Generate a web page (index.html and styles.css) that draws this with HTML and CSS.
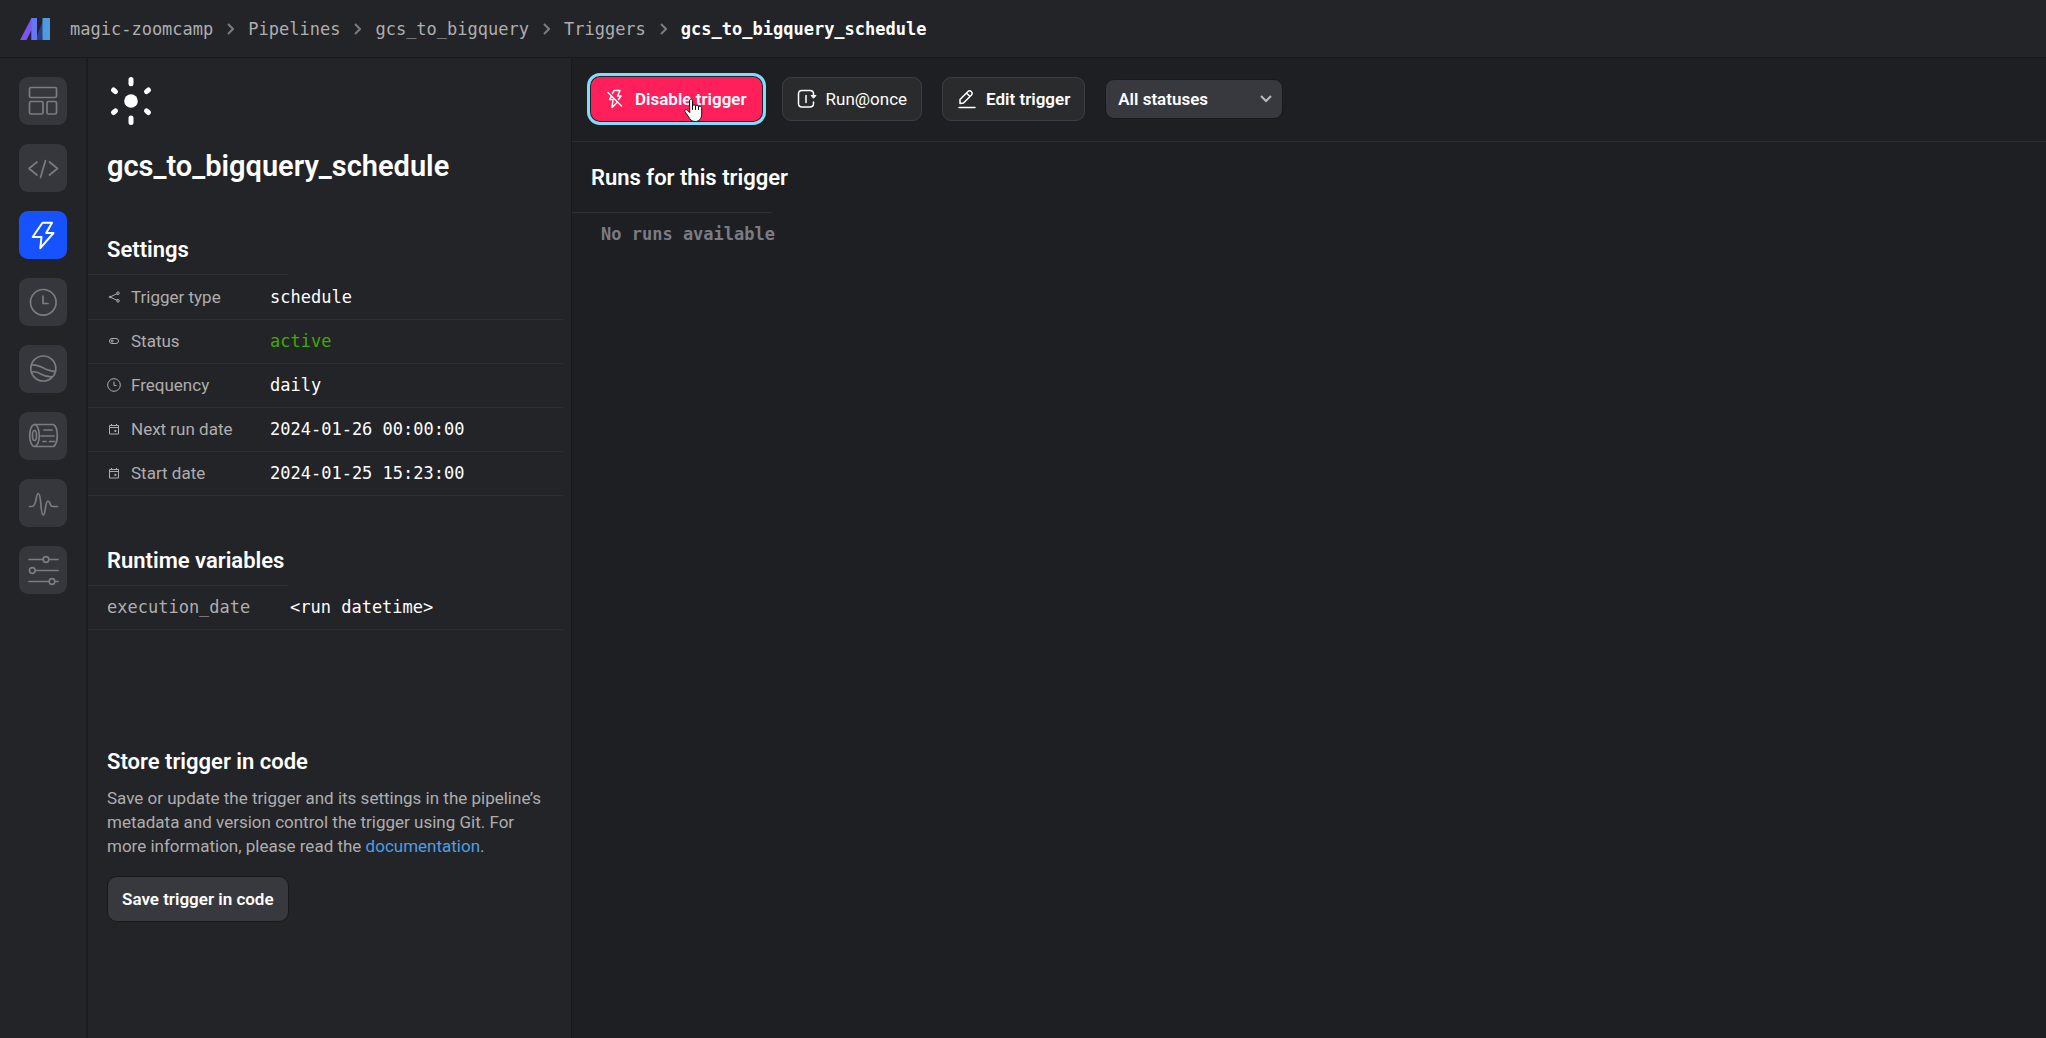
FILE: index.html
```html
<!DOCTYPE html>
<html lang="en">
<head>
<meta charset="utf-8">
<title>gcs_to_bigquery_schedule</title>
<link rel="stylesheet" href="styles.css">
</head>
<body>
<header class="topbar">
  <a class="logo" href="#" aria-label="Mage">
    <svg width="30" height="24" viewBox="0 0 30 24">
      <path d="M17 23V19L24 1h5L22 23z" fill="#2b3f86"/>
      <path d="M0 23 11.500 1H17v22h-5.500L11.500 13 6.500 23z" fill="#7a55ee"/>
      <path d="M11.500 1H17v22h-5.500z" fill="#6478f2"/>
      <path d="M22.500 1H30v22h-7.500z" fill="#4f9bdd"/>
    </svg>
  </a>
  <nav class="crumbs" aria-label="Breadcrumb">
    <a href="#">magic-zoomcamp</a>
    <svg class="sep" width="7" height="12" viewBox="0 0 7 12"><path d="m1 1 5 5-5 5"/></svg>
    <a href="#">Pipelines</a>
    <svg class="sep" width="7" height="12" viewBox="0 0 7 12"><path d="m1 1 5 5-5 5"/></svg>
    <a href="#">gcs_to_bigquery</a>
    <svg class="sep" width="7" height="12" viewBox="0 0 7 12"><path d="m1 1 5 5-5 5"/></svg>
    <a href="#">Triggers</a>
    <svg class="sep" width="7" height="12" viewBox="0 0 7 12"><path d="m1 1 5 5-5 5"/></svg>
    <a href="#" class="current" aria-current="page">gcs_to_bigquery_schedule</a>
  </nav>
</header>
<div class="body">
  <nav class="rail" aria-label="Pipeline">
    <a href="#" aria-label="Dashboard"><svg viewBox="0 0 48 48"><rect x="10.500" y="10.500" width="27" height="10" rx="1.500"/><rect x="10.500" y="24.500" width="13.500" height="12.500" rx="1.500"/><rect x="28" y="24.500" width="9.500" height="12.500" rx="1.500"/></svg></a>
    <a href="#" aria-label="Edit pipeline"><svg viewBox="0 0 48 48"><path d="m18 18-8 6.500 8 6.500M30.500 18l8 6.500-8 6.500M26.500 16.500l-5 17"/></svg></a>
    <a href="#" class="active" aria-label="Triggers"><svg viewBox="0 0 48 48"><path d="M23.500 11.800h9.500l-5.800 10.200H34.500L21.300 37.200l1.200-11.200h-8.800z"/></svg></a>
    <a href="#" aria-label="Runs"><svg viewBox="0 0 48 48"><circle cx="24.300" cy="24.300" r="12.800"/><path d="M24 18v7.500h5"/></svg></a>
    <a href="#" aria-label="Backfills"><svg viewBox="0 0 48 48"><circle cx="24.300" cy="23.500" r="12.500"/><path d="M12.500 20c9-2 12 6.500 24 6.500M12.500 27c8-2 10 5.500 20.500 4.800"/></svg></a>
    <a href="#" aria-label="Logs"><svg viewBox="0 0 48 48"><ellipse cx="15.500" cy="23.500" rx="4.800" ry="11"/><ellipse cx="15.500" cy="23.500" rx="2" ry="5"/><path d="M15.500 12.500h19c5 3 5 19 0 22h-19M25 18h8M22 24h13M24 29.500h3M30.500 29.500h5"/></svg></a>
    <a href="#" aria-label="Monitor"><svg viewBox="0 0 48 48"><path d="M10.500 27.500h2.500c5 0 3.500-13 6.300-13 3.200 0 2 21.500 4.900 21.500 2.600 0 1.800-14 4.800-14 2.500 0 1.500 5.500 4.500 5.500h5"/></svg></a>
    <a href="#" aria-label="Settings"><svg viewBox="0 0 48 48"><path d="M10 13.500h14M30 13.500h9M16.500 24.500H39M10 35.500h20M36 35.500h3"/><circle cx="27" cy="13.500" r="2.800"/><circle cx="13.300" cy="24.500" r="2.800"/><circle cx="33" cy="35.500" r="2.800"/></svg></a>
  </nav>
  <aside class="panel">
    <svg class="sun" width="48" height="48" viewBox="0 0 48 48"><circle cx="24" cy="24" r="6.800"/><path d="M24 2.500v4.300M24 41v4.500M6.500 13l2 1.700M41.500 13l-2 1.700M6.500 35.500l2-1.700M41.500 35.500l-2-1.700"/></svg>
    <h1>gcs_to_bigquery_schedule</h1>
    <section class="group">
      <h2>Settings</h2>
      <table class="rows settings">
        <tr><th scope="row"><span><svg viewBox="0 0 14 14"><path d="M3 7l7.500-3.500M3 7l7.500 3.500"/><circle cx="3" cy="7" r=".8"/><circle cx="11" cy="3.200" r="1.300"/><circle cx="11" cy="10.800" r="1.300"/></svg>Trigger type</span></th><td>schedule</td></tr>
        <tr><th scope="row"><span><svg viewBox="0 0 14 14"><rect x="2.500" y="4.500" width="9" height="5" rx="2.500"/><circle cx="5.200" cy="7" r="1"/></svg>Status</span></th><td class="ok">active</td></tr>
        <tr><th scope="row"><span><svg viewBox="0 0 14 14"><circle cx="7" cy="7" r="6.300"/><path d="M7 3.500v4h2.500"/></svg>Frequency</span></th><td>daily</td></tr>
        <tr><th scope="row"><span><svg viewBox="0 0 14 14"><path d="M2.500 3.500h9v8.500h-9zM2.500 5.500h9M4.500 2v1.500M9.500 2v1.500"/><path d="M7.800 8.300h1.200v1.200H7.800z"/></svg>Next run date</span></th><td>2024-01-26 00:00:00</td></tr>
        <tr><th scope="row"><span><svg viewBox="0 0 14 14"><path d="M2.500 3.500h9v8.500h-9zM2.500 5.500h9M4.500 2v1.500M9.500 2v1.500"/><path d="M7.800 8.300h1.200v1.200H7.800z"/></svg>Start date</span></th><td>2024-01-25 15:23:00</td></tr>
      </table>
    </section>
    <section class="group">
      <h2>Runtime variables</h2>
      <table class="rows variables">
        <tr><th scope="row">execution_date</th><td>&lt;run datetime&gt;</td></tr>
      </table>
    </section>
    <section class="store">
      <h2>Store trigger in code</h2>
      <p>Save or update the trigger and its settings in the pipeline’s metadata and version control the trigger using Git. For more information, please read the <a href="#">documentation</a>.</p>
      <button type="button" class="save">Save trigger in code</button>
    </section>
  </aside>
  <main class="main">
    <div class="toolbar">
      <button type="button" class="btn danger">
        <svg width="18" height="20" viewBox="0 0 18 20"><path d="M6.500 4.500 8 1.500h6L11.500 7H15l-2.500 3.500M5 7.500 3.500 10.500H7L6 18.500l4.500-4.500M2 3.500l13.500 13.500"/></svg>
        Disable trigger
        <svg class="pointer" width="19" height="25" viewBox="0 0 19 25"><path d="M5.500 2.500c0-2 3-2 3 0V8c0-1.700 3-1.700 3 0v.5c0-1.500 3-1.500 3 .3v.5c0-1.300 3.200-1.300 3.200.8V16c0 5-3 7.500-6.500 7.500S6 21.500 4.700 19L1 13.800c-.8-1.800 1.200-3 2.500-1.500l2 2zM8.500 8v3.500M11.500 8.500v3M14.500 9.300v2.200"/></svg>
      </button>
      <button type="button" class="btn plain">
        <svg width="20" height="20" viewBox="0 0 20 20"><path d="M16.500 8V5C16.500 3 15 1.500 13 1.500H5C3 1.500 1.500 3 1.500 5v9.500c0 2 1.500 3.500 3.500 3.500h8c2 0 3.500-1.500 3.500-3.500V13M9 6.500v7"/><path d="M14.500 6.500h4.500L16.700 9z" fill="#fff" stroke-width="1"/></svg>
        Run@once
      </button>
      <button type="button" class="btn">
        <svg width="20" height="20" viewBox="0 0 20 20"><path d="M3 14.500 3 10.500 11 2.500c2-2 5.500 1 3.500 3.500l-8 8zM9.500 4l3.500 3.500M2 18.500h16"/></svg>
        Edit trigger
      </button>
      <select class="status" aria-label="Status">
        <option>All statuses</option>
      </select>
    </div>
    <h2>Runs for this trigger</h2>
    <p class="empty">No runs available</p>
  </main>
</div>
</body>
</html>
```
FILE: styles.css
```css
* { box-sizing: border-box; }

body {
  margin: 0;
  min-height: 100vh;
  display: flex;
  flex-direction: column;
  background: #1e1f23;
  color: #fff;
  font: 17px/24px Roboto, sans-serif;
}

a { color: inherit; text-decoration: none; }
svg { fill: none; flex: none; }
h1, h2, p { margin: 0; }

h1 { font-size: 29px; line-height: 37px; font-weight: 600; }
h2 { font-size: 22px; line-height: 28px; font-weight: 600; }

.topbar {
  height: 58px;
  display: flex;
  align-items: center;
  gap: 20px;
  padding-left: 20px;
  background: #232428;
  border-bottom: 1px solid #18191c;
}

.logo { display: flex; }

.crumbs {
  display: flex;
  align-items: center;
  gap: 14px;
  font-family: "DejaVu Sans Mono", monospace;
  color: #aeaeae;
}

.crumbs .current { color: #fff; font-weight: 700; }
.sep { stroke: #7b7c80; stroke-width: 2; }

.body { flex: 1; display: flex; }

.rail {
  width: 88px;
  display: flex;
  flex-direction: column;
  gap: 19px;
  padding: 19px;
  background: #232428;
  border-right: 2px solid #1b1c1f;
}

.rail a {
  width: 48px;
  height: 48px;
  border-radius: 9px;
  background: #36373c;
}

.rail svg {
  display: block;
  stroke: #7b7c80;
  stroke-width: 1.7;
  stroke-linecap: round;
  stroke-linejoin: round;
}

.rail .active { background: #1752ff; }
.rail .active svg { stroke: #fff; stroke-width: 2; }

.panel {
  width: 484px;
  padding-top: 19px;
  background: #232428;
  border-right: 1px solid #18191c;
}

.sun {
  display: block;
  margin-left: 19px;
  stroke: #fff;
  stroke-width: 5;
  stroke-linecap: round;
}

.sun circle { fill: #fff; stroke: none; }

.panel h1 { margin: 23px 19px 0; }

.group { margin-top: 51px; }

.group h2, .main h2 { padding: 0 19px; }

.group h2::after, .main h2::after {
  content: "";
  display: block;
  width: 200px;
  height: 1px;
  margin: 10px 0 0 -19px;
  background: #303136;
}

.rows {
  width: 475px;
  border-collapse: collapse;
  table-layout: fixed;
}

.rows th, .rows td {
  height: 44px;
  padding: 0;
  border-bottom: 1px solid #2d2e32;
  text-align: left;
  font-weight: 400;
}

.rows th { width: 182px; padding-left: 19px; color: #aeaeae; }
.rows th span { display: flex; align-items: center; gap: 10px; }
.rows svg { width: 14px; height: 14px; stroke: #aeaeae; }
.rows td, .variables th { font-family: "DejaVu Sans Mono", monospace; }
.variables th { width: 202px; }
.rows .ok { color: #43a800; }

.store {
  margin: 118px 19px 0;
  color: #aeaeae;
}

.store h2 { color: #fff; }
.store p { margin-top: 10px; }
.store a { color: #4f9fe3; }

.save {
  height: 46px;
  margin-top: 18px;
  padding: 0 14px;
  border: 1px solid #18191c;
  border-radius: 10px;
  background: #38393f;
  color: #fff;
  font: 600 17px/24px Roboto, sans-serif;
}

.main { flex: 1; min-width: 0; }

.toolbar {
  display: flex;
  align-items: center;
  gap: 20px;
  padding: 19px 19px 20px;
  border-bottom: 1px solid #2d2e32;
}

.btn {
  position: relative;
  height: 44px;
  display: flex;
  align-items: center;
  gap: 9px;
  padding: 0 14px;
  border: 1px solid #3c3d40;
  border-radius: 9px;
  background: #2a2b2d;
  color: #fff;
  font: 600 17px/24px Roboto, sans-serif;
}

.btn svg {
  stroke: #fff;
  stroke-width: 1.5;
  stroke-linecap: round;
  stroke-linejoin: round;
}

.plain { font-weight: 400; }

.danger {
  gap: 11px;
  border-color: #ff1f5b;
  background: #ff1f5b;
  box-shadow: 0 0 0 1px #232428, 0 0 0 4px #85dcfa;
}

.btn .pointer {
  position: absolute;
  left: 92px;
  top: 20px;
  fill: #fff;
  stroke: #111;
  stroke-width: 1;
}

.status {
  appearance: none;
  width: 178px;
  height: 40px;
  padding: 0 12px;
  border: 1px solid #18191c;
  border-radius: 9px;
  background: #38393f url("data:image/svg+xml,%3Csvg xmlns='http://www.w3.org/2000/svg' width='12' height='8'%3E%3Cpath d='m1 1 5 5 5-5' fill='none' stroke='%23b9babd' stroke-width='2'/%3E%3C/svg%3E") no-repeat right 10px center;
  color: #fff;
  font: 600 17px/24px Roboto, sans-serif;
}

.main h2 { padding-top: 22px; }
.main h2::after { margin-top: 20px; }

.empty {
  padding: 9px 29px;
  color: #7b7c83;
  font-family: "DejaVu Sans Mono", monospace;
  font-weight: 700;
}
```
